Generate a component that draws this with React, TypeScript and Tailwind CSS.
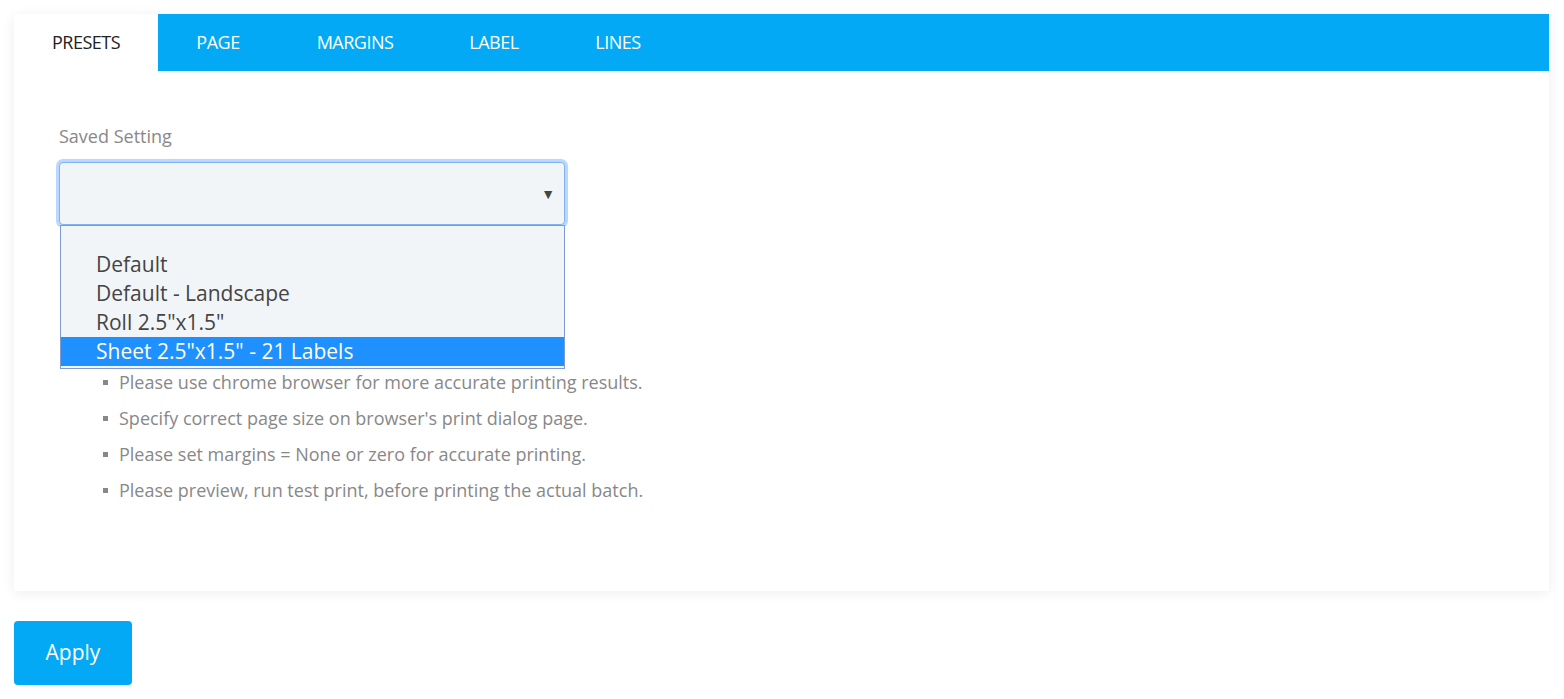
import React from "react";

const tabs = ["PRESETS", "PAGE", "MARGINS", "LABEL", "LINES"];
const options = ["Default", "Default - Landscape", 'Roll 2.5"x1.5"', 'Sheet 2.5"x1.5" - 21 Labels'];
const notes = [
  "Please use chrome browser for more accurate printing results.",
  "Specify correct page size on browser's print dialog page.",
  "Please set margins = None or zero for accurate printing.",
  "Please preview, run test print, before printing the actual batch.",
];

export default function App() {
  return (
    <div className="min-h-[699px] bg-white p-[14px]" style={{ fontFamily: "'Open Sans', sans-serif" }}>
      <div className="w-[1535px] bg-white shadow-[0_2px_12px_rgba(0,0,0,0.07)]">
        <div className="flex h-[57px] bg-[#03a9f4]">
          {tabs.map((t, i) => (
            <div
              key={t}
              className={
                i === 0
                  ? "flex w-[144px] items-center justify-center bg-white text-[18px] tracking-[-0.5px] text-[#222]"
                  : "flex items-center justify-center text-[18px] tracking-[-0.5px] text-white"
              }
              style={i === 1 ? { width: 120 } : i === 2 ? { width: 154 } : i === 3 ? { width: 124 } : i === 4 ? { width: 124 } : undefined}
            >
              {t}
            </div>
          ))}
        </div>
        <div className="pl-[45px] pt-[53px] pb-[83px]">
          <div className="text-[18px] leading-[24px] text-[#888]">Saved Setting</div>
          <div className="relative mt-[14px] w-[506px]">
            <div className="flex h-[63px] items-center justify-end rounded-[4px] border border-[#80b3f0] bg-[#f2f5f8] pr-[9px] shadow-[0_0_0_3px_#b9d8ff]">
              <span className="text-[14px] text-[#444]">▼</span>
            </div>
            <div className="absolute left-[1px] top-[63px] z-10 w-[505px] border border-[#7d9bd2] bg-[#f2f5f8] pt-[24px] pb-[2px] text-[21px] text-[#444]">
              {options.map((o, i) => (
                <div
                  key={o}
                  className={
                    i === 3
                      ? "h-[29px] bg-[#1e90ff] pl-[35px] leading-[29px] text-white"
                      : "h-[29px] pl-[35px] leading-[29px]"
                  }
                >
                  {o}
                </div>
              ))}
            </div>
          </div>
          <ul className="mt-[139px] pl-[44px] text-[18px] text-[#888]">
            {notes.map((n) => (
              <li key={n} className="flex h-[36px] items-center">
                <span className="mr-[11px] inline-block h-[5px] w-[5px] bg-[#888]" />
                {n}
              </li>
            ))}
          </ul>
        </div>
      </div>
      <button className="mt-[30px] flex h-[64px] w-[118px] items-center justify-center rounded-[4px] bg-[#03a9f4] text-[21px] text-white">
        Apply
      </button>
    </div>
  );
}
